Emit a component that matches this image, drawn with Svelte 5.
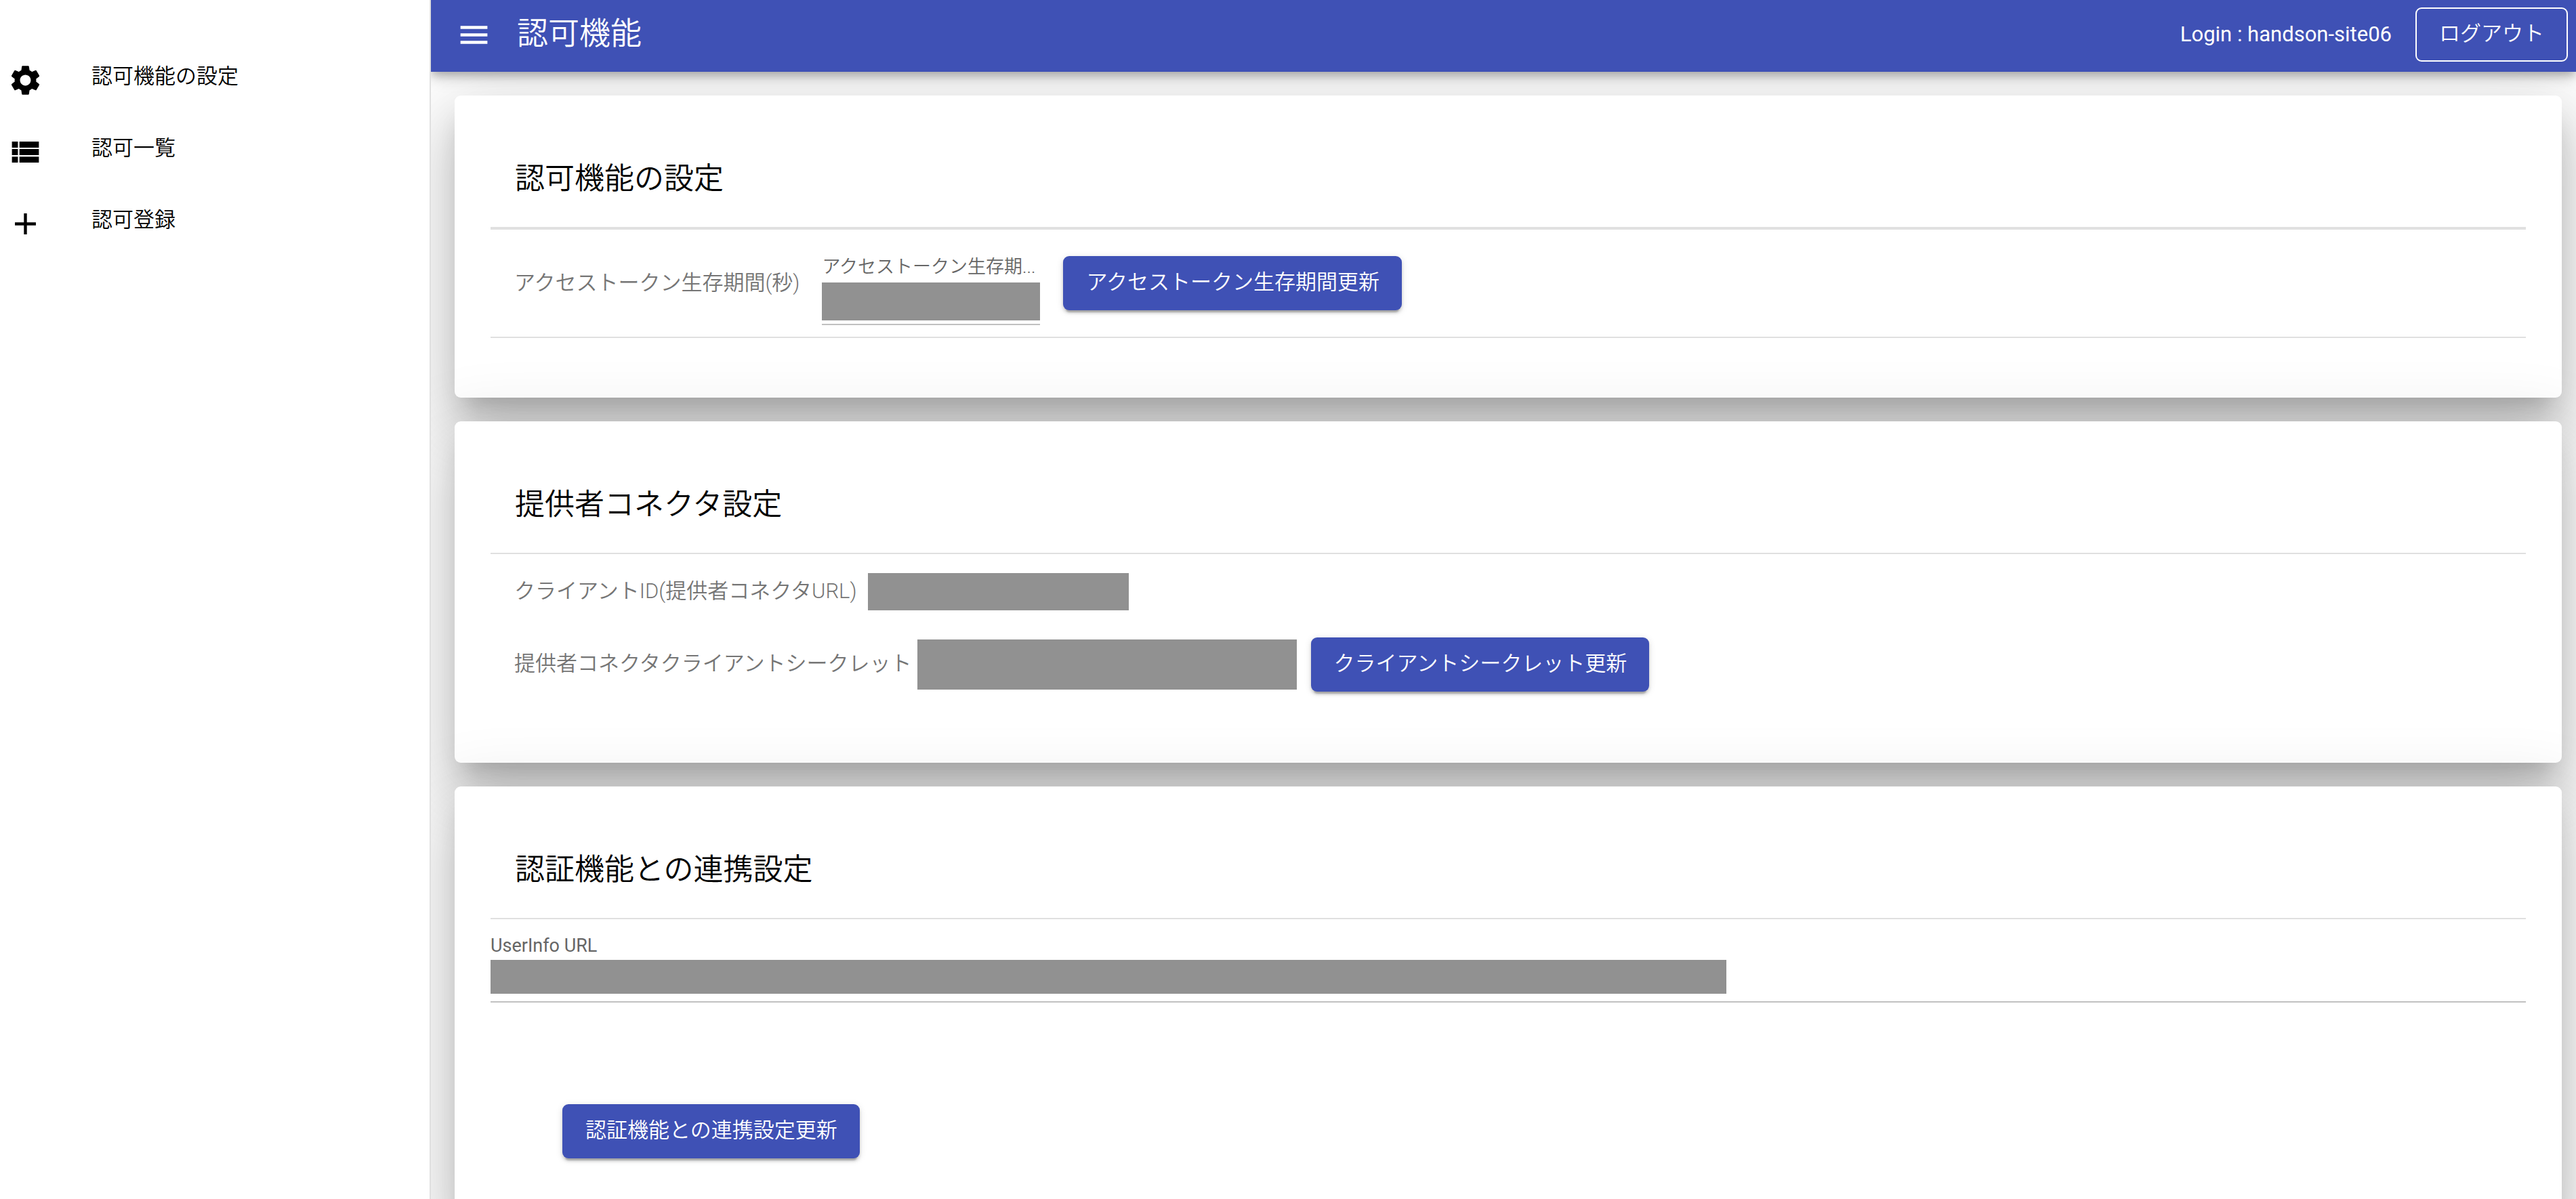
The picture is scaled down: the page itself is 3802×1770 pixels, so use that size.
<script>
  const navItems = [
    {
      label: '認可機能の設定',
      icon: 'M19.14 12.94c.04-.3.06-.61.06-.94 0-.32-.02-.64-.07-.94l2.03-1.58c.18-.14.23-.41.12-.61l-1.92-3.32c-.12-.22-.37-.29-.59-.22l-2.39.96c-.5-.38-1.03-.7-1.62-.94l-.36-2.54c-.04-.24-.24-.41-.48-.41h-3.84c-.24 0-.43.17-.47.41l-.36 2.54c-.59.24-1.13.57-1.62.94l-2.39-.96c-.22-.08-.47 0-.59.22L2.74 8.87c-.12.21-.08.47.12.61l2.03 1.58c-.05.3-.09.63-.09.94s.02.64.07.94l-2.03 1.58c-.18.14-.23.41-.12.61l1.92 3.32c.12.22.37.29.59.22l2.39-.96c.5.38 1.03.7 1.62.94l.36 2.54c.05.24.24.41.48.41h3.84c.24 0 .44-.17.47-.41l.36-2.54c.59-.24 1.13-.56 1.62-.94l2.39.96c.22.08.47 0 .59-.22l1.92-3.32c.12-.22.07-.47-.12-.61l-2.01-1.58zM12 15.6c-1.98 0-3.6-1.62-3.6-3.6s1.62-3.6 3.6-3.6 3.6 1.62 3.6 3.6-1.62 3.6-3.6 3.6z'
    },
    {
      label: '認可一覧',
      icon: 'M3 14h4v-4H3v4zm0 5h4v-4H3v4zM3 9h4V5H3v4zm5 5h13v-4H8v4zm0 5h13v-4H8v4zM8 5v4h13V5H8z'
    },
    { label: '認可登録', icon: 'M19 13h-6v6h-2v-6H5v-2h6V5h2v6h6v2z' }
  ];
</script>

<div class="shell" lang="ja">
  <nav class="sidebar">
    {#each navItems as item}
      <a class="nav-item" href="#top">
        <svg class="icon" viewBox="0 0 24 24" aria-hidden="true"><path d={item.icon} /></svg>
        <span>{item.label}</span>
      </a>
    {/each}
  </nav>

  <div class="page">
    <header class="toolbar">
      <button class="menu" aria-label="menu">
        <svg class="icon" viewBox="0 0 24 24" aria-hidden="true">
          <path d="M3 18h18v-2H3v2zm0-5h18v-2H3v2zm0-7v2h18V6H3z" />
        </svg>
      </button>
      <h1>認可機能</h1>
      <span class="login">Login : handson-site06</span>
      <button class="btn outlined">ログアウト</button>
    </header>

    <main>
      <section class="card">
        <h2>認可機能の設定</h2>
        <div class="token-row">
          <span class="caption">アクセストークン生存期間(秒)</span>
          <div class="field short">
            <label for="lifetime">アクセストークン生存期...</label>
            <input id="lifetime" type="text" />
          </div>
          <button class="btn raised">アクセストークン生存期間更新</button>
        </div>
      </section>

      <section class="card">
        <h2>提供者コネクタ設定</h2>
        <div class="connector">
          <div class="line">
            <label class="caption" for="client-id">クライアントID(提供者コネクタURL)</label>
            <input id="client-id" type="text" readonly />
          </div>
          <div class="line">
            <label class="caption" for="client-secret">提供者コネクタクライアントシークレット</label>
            <input id="client-secret" type="text" readonly />
            <button class="btn raised">クライアントシークレット更新</button>
          </div>
        </div>
      </section>

      <section class="card">
        <h2>認証機能との連携設定</h2>
        <div class="field wide">
          <label for="userinfo">UserInfo URL</label>
          <input id="userinfo" type="text" />
        </div>
        <div class="actions">
          <button class="btn raised">認証機能との連携設定更新</button>
        </div>
      </section>
    </main>
  </div>
</div>

<style>
  :global(body) {
    background: #fff;
  }

  .shell {
    display: flex;
    height: 100vh;
    overflow: hidden;
    font-family: Roboto, 'Noto Sans CJK JP', sans-serif;
    font-size: 31px;
    font-weight: 350;
    line-height: 44px;
    color: #000;
  }

  .shell * {
    box-sizing: border-box;
  }

  .sidebar {
    flex: 0 0 636px;
    padding-top: 65px;
    border-right: 2px solid #e0e0e0;
    background: #fff;
  }

  .nav-item {
    display: flex;
    align-items: center;
    gap: 71px;
    height: 106px;
    padding-left: 11px;
    color: #000;
    text-decoration: none;
  }

  .nav-item span {
    padding-bottom: 10px;
  }

  .icon {
    display: block;
    width: 53px;
    height: 53px;
    fill: currentColor;
  }

  .page {
    flex: 1;
    min-width: 0;
    display: flex;
    flex-direction: column;
    overflow: hidden;
  }

  .toolbar {
    position: relative;
    z-index: 1;
    flex: none;
    display: flex;
    align-items: center;
    height: 106px;
    padding: 0 12px 4px 37px;
    background: #3f51b5;
    color: #fff;
    box-shadow:
      0 7px 11px -2px rgba(0, 0, 0, 0.16),
      0 9px 22px 0 rgba(0, 0, 0, 0.14),
      0 2px 22px 0 rgba(0, 0, 0, 0.12);
  }

  .menu {
    padding: 0;
    border: 0;
    background: none;
    color: inherit;
  }

  h1 {
    flex: 1;
    margin: 0 0 0 37px;
    padding-bottom: 4px;
    font-size: 46px;
    font-weight: inherit;
    line-height: 66px;
  }

  .login {
    margin-right: 35px;
    font-weight: 400;
  }

  main {
    display: flex;
    flex-direction: column;
    gap: 35px;
    padding: 35px 21px 35px 35px;
  }

  .card {
    padding: 53px 53px 88px;
    border-radius: 9px;
    background: #fff;
    box-shadow:
      0 24px 33px -15px rgba(0, 0, 0, 0.2),
      0 53px 84px 7px rgba(0, 0, 0, 0.14),
      0 20px 101px 18px rgba(0, 0, 0, 0.12);
  }

  h2 {
    display: flex;
    align-items: center;
    height: 143px;
    margin: 0;
    padding: 0 0 2px 36px;
    border-bottom: 2px solid #e0e0e0;
    font-size: 44px;
    font-weight: inherit;
  }

  .caption {
    color: #757575;
  }

  .btn {
    height: 80px;
    padding: 0 33px 3px 34px;
    border: 0;
    border-radius: 9px;
    font: inherit;
    color: #fff;
    white-space: nowrap;
  }

  .raised {
    background: #3f51b5;
    box-shadow:
      0 7px 2px -4px rgba(0, 0, 0, 0.2),
      0 4px 4px 0 rgba(0, 0, 0, 0.14),
      0 2px 11px 0 rgba(0, 0, 0, 0.12);
  }

  .outlined {
    padding-left: 33px;
    border: 2px solid #fff;
    background: none;
  }

  input {
    display: block;
    padding: 0 8px;
    border: 0;
    border-radius: 0;
    background: #919191;
    font: inherit;
  }

  .token-row {
    display: flex;
    align-items: center;
    height: 162px;
    padding-left: 35px;
    border-top: 2px solid #e0e0e0;
    border-bottom: 2px solid #e0e0e0;
  }

  .field {
    border-bottom: 2px solid #c1c1c1;
  }

  .field label {
    display: block;
    font-size: 27px;
    line-height: 36px;
    color: #666;
    white-space: nowrap;
  }

  .short {
    width: 322px;
    margin: 0 34px 0 33px;
    padding: 20px 0 5px;
  }

  .short input {
    width: 100%;
    height: 56px;
    margin-top: 5px;
  }

  .wide {
    padding: 21px 0 11px;
  }

  .wide label {
    font-weight: 400;
  }

  .wide input {
    width: 1824px;
    max-width: 100%;
    height: 50px;
    margin-top: 3px;
  }

  .connector {
    display: flex;
    flex-direction: column;
    gap: 40px;
    padding: 28px 0 17px 35px;
  }

  .line {
    display: flex;
    align-items: center;
  }

  .line .caption {
    padding-bottom: 2px;
  }

  #client-id {
    width: 385px;
    height: 55px;
    margin-left: 16px;
  }

  #client-secret {
    width: 560px;
    height: 74px;
    margin: 0 21px 0 8px;
  }

  .actions {
    padding: 150px 0 0 106px;
  }
</style>
